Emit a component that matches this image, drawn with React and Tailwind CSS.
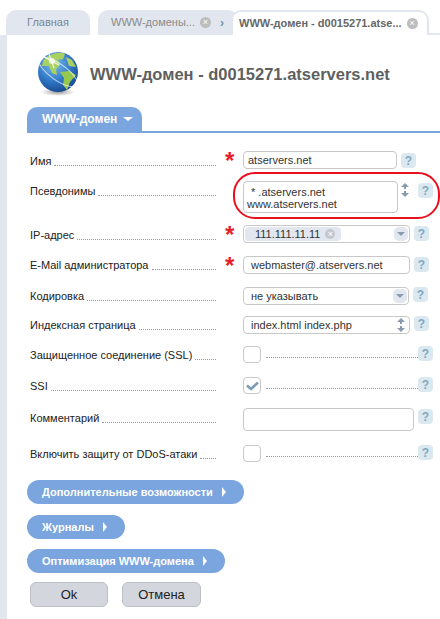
import React from 'react';

const font = { fontFamily: '"Liberation Sans", Arial, sans-serif' };

const Help = ({ className = '' }) => (
  <span className={`flex h-[15px] w-[15px] shrink-0 items-center justify-center rounded-[4px] bg-[#dce8ef] text-[12px] font-bold leading-none text-[#7fa8c4] ${className}`}>
    ?
  </span>
);

const Star = () => (
  <span className="-mt-[2px] block h-[18px] pl-[9px] text-[24px] font-bold leading-[24px] text-[#e8202a]">*</span>
);

const Row = ({ label, star, labelClass = '', className = '', children }) => (
  <div className={`flex items-start ${className}`}>
    <div className={`flex h-[18px] w-[186px] shrink-0 items-center text-[11px] text-[#222222] ${labelClass}`}>
      <span className="whitespace-nowrap">{label}</span>
      <span className="ml-[3px] mt-[8px] flex-1 border-b border-dotted border-[#999999]"></span>
    </div>
    <div className="w-[27px] shrink-0">{star && <Star />}</div>
    {children}
  </div>
);

const Field = ({ className = '', children }) => (
  <div className={`flex h-[18px] items-center rounded-[4px] border border-[#c8c8c8] bg-white text-[11px] text-[#333333] ${className}`}>
    {children}
  </div>
);

const SelectArrow = () => (
  <span className="ml-auto mr-[1px] flex h-[14px] w-[14px] items-center justify-center rounded-[5px] bg-[#e1e6ef]">
    <span className="h-0 w-0 border-x-[4px] border-t-[4px] border-x-transparent border-t-[#8c9cb0]"></span>
  </span>
);

const Stepper = ({ className = '' }) => (
  <svg width="8" height="14" viewBox="0 0 8 14" className={className}>
    <path d="M4 0 L8 4 H5 V6 H3 V4 H0 Z M3 8 H5 V10 H8 L4 14 L0 10 H3 Z" fill="#8a9bb0" />
  </svg>
);

const Checkbox = ({ checked }) => (
  <span className="flex h-[17px] w-[18px] shrink-0 items-center justify-center rounded-[4px] border border-[#c8c8c8] bg-white">
    {checked && (
      <svg width="13" height="10" viewBox="0 0 13 10">
        <path d="M1 4.5 L5 8 L12 1.5" fill="none" stroke="#7c9cb8" strokeWidth="2.6" />
      </svg>
    )}
  </span>
);

const CheckRow = ({ label, checked, labelClass, className = '' }) => (
  <Row label={label} labelClass={labelClass} className={className}>
    <Checkbox checked={checked} />
    <span className="ml-[5px] mt-[11px] w-[152px] border-b border-dotted border-[#999999]"></span>
    <Help />
  </Row>
);

const Pill = ({ children, className = '' }) => (
  <button className={`flex h-[24px] items-center rounded-full bg-[#7aa5de] pl-[15px] text-[11px] font-bold text-white ${className}`}>
    {children}
    <span className="ml-[9px] h-0 w-0 border-y-[5px] border-l-[4px] border-y-transparent border-l-white"></span>
  </button>
);

const Globe = () => (
  <svg width="46" height="46" viewBox="0 0 46 46" className="shrink-0">
    <defs>
      <radialGradient id="sea" cx="0.4" cy="0.3" r="0.8">
        <stop offset="0" stopColor="#7cc0ee" />
        <stop offset="0.55" stopColor="#2f76c4" />
        <stop offset="1" stopColor="#123f80" />
      </radialGradient>
      <radialGradient id="shadow" cx="0.5" cy="0.5" r="0.5">
        <stop offset="0" stopColor="#555555" stopOpacity="0.6" />
        <stop offset="1" stopColor="#555555" stopOpacity="0" />
      </radialGradient>
    </defs>
    <ellipse cx="23" cy="41" rx="17" ry="4" fill="url(#shadow)" />
    <circle cx="23" cy="21" r="20" fill="url(#sea)" />
    <path d="M8 10 C13 3 24 0 30 3 L28 8 L23 9 L25 14 L21 18 L22 24 L17 22 L14 15 L7 15 Z" fill="#a9d162" />
    <path d="M25 21 L34 20 L41 24 L35 31 L32 39 L28 34 L29 27 Z" fill="#96c850" />
    <path d="M31 6 L37 9 L41 16 L34 15 Z" fill="#a9d162" />
    <ellipse cx="23" cy="21" rx="23" ry="8" fill="none" stroke="#ffffff" strokeWidth="1" opacity="0.7" transform="rotate(35 23 21)" />
    <path d="M9 6 L24 14 M14 3 L19 17" stroke="#ffffff" strokeWidth="1.2" opacity="0.8" />
    <circle cx="17" cy="10" r="3" fill="#ffffff" opacity="0.75" />
  </svg>
);

export default function App() {
  return (
    <div style={font} className="relative h-[619px] w-[440px] overflow-hidden bg-white">
      {/* tabs */}
      <div className="flex h-[35px] items-end pl-[6px] pt-[10px] text-[11px]">
        <div className="flex h-[25px] w-[84px] items-center justify-center rounded-t-[10px] bg-[#e1e6ef] text-[#7a8794]">Главная</div>
        <div className="ml-[8px] flex h-[25px] w-[140px] items-center rounded-t-[10px] bg-[#e1e6ef] pl-[13px] text-[#8a8a8a]">
          <span>WWW-домены...</span>
          <span className="ml-[5px] flex h-[11px] w-[11px] items-center justify-center rounded-full bg-[#bdbdbd] text-[9px] leading-none text-white">×</span>
          <span className="ml-[9px] text-[12px] font-bold text-[#6f93ad]">›</span>
        </div>
        <div className="-ml-[7px] flex h-[25px] w-[198px] items-center rounded-t-[10px] border-x-2 border-t-2 border-[#e1e6ef] bg-white pl-[6px] font-bold text-[#666666]">
          <span className="whitespace-nowrap">WWW-домен - d0015271.atse...</span>
          <span className="ml-[5px] flex h-[11px] w-[11px] items-center justify-center rounded-full bg-[#bdbdbd] text-[9px] font-normal leading-none text-white">×</span>
        </div>
        <div className="h-[2px] flex-1 bg-[#e1e6ef]"></div>
      </div>

      <div className="flex h-[584px]">
        <div className="w-[7px] shrink-0 bg-[#e1e6ef]"></div>
        <div className="flex-1">
          {/* title */}
          <div className="ml-[28px] mt-[16px] flex h-[46px] items-center">
            <Globe />
            <h1 className="ml-[9px] whitespace-nowrap text-[16.5px] font-bold text-[#5f5f5f]">WWW-домен - d0015271.atservers.net</h1>
          </div>

          {/* section tab */}
          <div className="ml-[20px] mt-[10px] border-b-2 border-[#7aa5de]">
            <div className="flex h-[24px] w-[115px] items-center rounded-t-[10px] bg-[#7aa5de] pl-[15px] text-[12px] font-bold text-white">
              WWW-домен
              <span className="ml-[6px] h-0 w-0 border-x-[5px] border-t-[4px] border-x-transparent border-t-white"></span>
            </div>
          </div>

          {/* form */}
          <div className="ml-[23px]">
            <Row label="Имя" star labelClass="pt-[3px]" className="mt-[18px]">
              <Field className="w-[154px] bg-[#fafafa] pl-[4px]">atservers.net</Field>
              <Help className="ml-[4px] mt-[2px]" />
            </Row>
            <Row label="Псевдонимы" labelClass="pt-[3px]" className="mt-[12px]">
              <div className="h-[32px] w-[155px] rounded-[4px] border border-[#c8c8c8] bg-white pl-[3px] pt-[4px] text-[11px] leading-[12px] text-[#333333]">
                <div className="pl-[4px]">* .atservers.net</div>
                <div>www.atservers.net</div>
              </div>
              <Stepper className="ml-[3px] mt-[2px]" />
              <Help className="ml-[9px] mt-[2px]" />
            </Row>
            <Row label="IP-адрес" star labelClass="pt-[3px]" className="mt-[12px]">
              <Field className="w-[167px]">
                <span className="ml-[1px] flex h-[14px] w-[96px] items-center rounded-[4px] bg-[#e1e6ef] pl-[10px] text-[11px]">
                  111.111.11.11
                  <span className="ml-[5px] flex h-[10px] w-[10px] items-center justify-center rounded-full bg-[#c4c8ce] text-[9px] leading-none text-white">×</span>
                </span>
                <SelectArrow />
              </Field>
              <Help className="ml-[4px] mt-[1px]" />
            </Row>
            <Row label="E-Mail администратора" star labelClass="pt-[1px]" className="mt-[13px]">
              <Field className="w-[167px] pl-[7px]">webmaster@.atservers.net</Field>
              <Help className="ml-[4px] mt-[1px]" />
            </Row>
            <Row label="Кодировка" labelClass="pt-[1px]" className="mt-[13px]">
              <Field className="w-[166px] pl-[7px]">
                не указывать
                <SelectArrow />
              </Field>
              <Help className="ml-[4px]" />
            </Row>
            <Row label="Индексная страница" labelClass="pt-[1px]" className="mt-[11px]">
              <Field className="w-[167px] pl-[7px]">
                index.html index.php
                <Stepper className="ml-auto mr-[4px]" />
              </Field>
              <Help className="ml-[4px]" />
            </Row>
            <CheckRow label="Защищенное соединение (SSL)" className="mt-[12px]" />
            <CheckRow label="SSI" checked className="mt-[13px]" />
            <Row label="Комментарий" labelClass="pt-[2px]" className="mt-[13px]">
              <Field className="!h-[23px] w-[171px]"></Field>
              <Help className="ml-[4px] mt-[1px]" />
            </Row>
            <CheckRow label="Включить защиту от DDoS-атаки" labelClass="pt-[1px]" className="mt-[14px]" />
          </div>

          {/* sections */}
          <div className="ml-[20px] mt-[17px] flex flex-col items-start gap-[11px]">
            <Pill className="w-[217px]">Дополнительные возможности</Pill>
            <Pill className="w-[98px]">Журналы</Pill>
            <Pill className="-mt-[1px] w-[198px]">Оптимизация WWW-домена</Pill>
          </div>

          <div className="ml-[23px] mt-[9px] flex gap-[14px] text-[13px]">
            <button className="h-[25px] w-[78px] rounded-[6px] border border-[#bcc0c6] bg-[#d3d6dc] text-[#222222]">Ok</button>
            <button className="h-[25px] w-[79px] rounded-[6px] border border-[#bcc0c6] bg-[#d3d6dc] text-[#222222]">Отмена</button>
          </div>
        </div>
      </div>

      {/* red highlight drawn over the aliases row */}
      <div className="absolute left-[233px] top-[172px] h-[47px] w-[207px] rounded-[22px] border-2 border-[#e8101c]"></div>
    </div>
  );
}
